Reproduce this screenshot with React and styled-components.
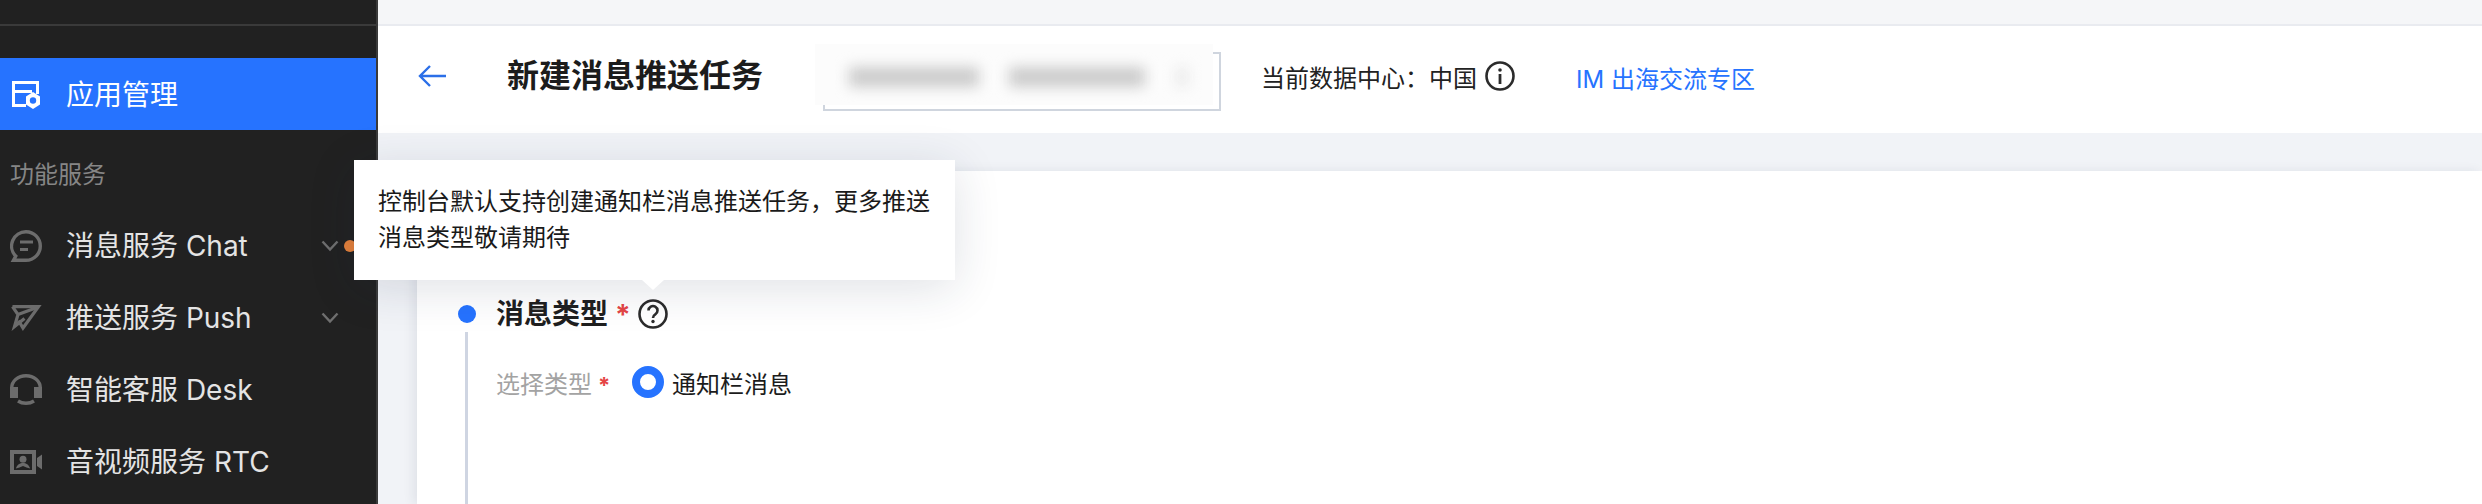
import React from "react";
import styled, { createGlobalStyle } from "styled-components";

const FONT = `Inter, "Noto Sans CJK SC", "Noto Sans", sans-serif`;

const Global = createGlobalStyle`
  html, body { margin: 0; padding: 0; background: #f1f3f7; }
  * { box-sizing: border-box; }
  #root { font-family: ${FONT}; }
`;

const Page = styled.div`
  position: relative;
  display: flex;
  width: 2482px;
  height: 504px;
  overflow: hidden;
  background: #f1f3f7;
`;

const Sidebar = styled.aside`
  flex: 0 0 378px;
  height: 100%;
  background: #212121;
  border-right: 2px solid #3a3a3a;
  padding-top: 24px;
  color: #e4e4e4;
`;

const SideRule = styled.div`
  height: 2px;
  background: #3a3a3a;
  margin-bottom: 32px;
`;

const NavRow = styled.div`
  position: relative;
  display: flex;
  align-items: center;
  height: 72px;
  padding-left: 10px;
  font-size: 28px;
  color: ${(p) => (p.$active ? "#ffffff" : "#e4e4e4")};
  background: ${(p) => (p.$active ? "#2673ff" : "transparent")};
  svg.nav-icon { flex: 0 0 32px; margin-right: 24px; }
`;

const NavText = styled.span`
  margin-bottom: ${(p) => (p.$active ? 3 : 4)}px;
`;

const NavChevron = styled.svg`
  position: absolute;
  left: 321px;
  top: 30px;
`;

const Dot = styled.span`
  position: absolute;
  left: 344px;
  top: 30px;
  width: 12px;
  height: 12px;
  border-radius: 50%;
  background: #e37f3a;
`;

const SectionLabel = styled.div`
  padding: 28px 0 18px 10px;
  font-size: 24px;
  line-height: 34px;
  color: #868686;
`;

const Main = styled.main`
  flex: 1;
  display: flex;
  flex-direction: column;
  min-width: 0;
  height: 100%;
`;

const TopStrip = styled.div`
  flex: 0 0 26px;
  background: #f5f6f8;
  border-bottom: 2px solid #e9ebf0;
`;

const Header = styled.header`
  flex: 0 0 107px;
  display: flex;
  align-items: center;
  padding: 0 0 7px 40px;
  background: #fff;
`;

const Title = styled.h1`
  margin: 0 0 0 61px;
  font-size: 32px;
  line-height: 44px;
  font-weight: 700;
  color: #1c1c1c;
`;

const SelectBox = styled.div`
  position: relative;
  width: 398px;
  height: 59px;
  margin: 10px 0 0 60px;
  border: 2px solid #cfd5de;
`;

const BlurCover = styled.div`
  position: absolute;
  left: -10px;
  top: -10px;
  width: 398px;
  height: 61px;
  background: #fcfcfc;
  display: flex;
  align-items: center;
  padding: 5px 0 0 34px;
  gap: 30px;
`;

const BlurBlock = styled.span`
  display: block;
  width: ${(p) => p.$w}px;
  height: 20px;
  background: ${(p) => p.$c || "#cbcbcb"};
  filter: blur(7px);
`;

const DataCenter = styled.div`
  display: flex;
  align-items: center;
  margin: 0 0 0 40px;
  font-size: 24px;
  color: #222;
  svg { margin-left: 8px; }
`;

const HeaderLink = styled.a`
  margin: 3px 0 0 61px;
  font-size: 24px;
  color: #2673ff;
`;

const Card = styled.section`
  position: relative;
  flex: 1 1 0;
  min-height: 0;
  margin: 38px 0 0 39px;
  padding: 125px 0 0 41px;
  background: #fff;
  box-shadow: -4px 0 10px rgba(30, 40, 70, 0.08);
`;

const StepHead = styled.div`
  display: flex;
  align-items: center;
  height: 36px;
`;

const StepDot = styled.span`
  flex: 0 0 18px;
  height: 18px;
  border-radius: 50%;
  background: #2673ff;
  margin-right: 20px;
`;

const StepTitle = styled.h2`
  margin: 0;
  font-size: 28px;
  line-height: 36px;
  font-weight: 700;
  color: #1f1f1f;
`;

const Star = styled.span`
  color: #e54545;
  font-size: ${(p) => p.$size}px;
  font-weight: 700;
  margin-left: ${(p) => p.$gap}px;
  padding-top: ${(p) => p.$drop}px;
  line-height: 1;
`;

const HelpIcon = styled.svg`
  margin-left: 7px;
`;

const StepBody = styled.div`
  margin: 0 0 0 7px;
  height: 200px;
  border-left: 3px solid #cfd5e2;
  padding: 32px 0 0 28px;
`;

const Field = styled.div`
  display: flex;
  align-items: center;
  height: 36px;
`;

const FieldLabel = styled.label`
  display: flex;
  align-items: center;
  width: 136px;
  font-size: 24px;
  color: #a3a3a3;
`;

const Radio = styled.span`
  flex: 0 0 32px;
  height: 32px;
  border-radius: 50%;
  border: 8px solid #2673ff;
  background: #fff;
  margin-right: 8px;
`;

const RadioText = styled.span`
  font-size: 24px;
  color: #1c1c1c;
`;

const Tooltip = styled.div`
  position: absolute;
  left: 354px;
  top: 160px;
  width: 601px;
  height: 120px;
  padding: 24px 24px;
  background: #fff;
  font-size: 24px;
  line-height: 36px;
  color: #1a1a1a;
  box-shadow: 0 8px 48px rgba(30, 40, 70, 0.14);
  &::after {
    content: "";
    position: absolute;
    left: 288px;
    bottom: -10px;
    width: 0;
    height: 0;
    border-left: 11px solid transparent;
    border-right: 11px solid transparent;
    border-top: 10px solid #fff;
  }
`;

const AppIcon = () => (
  <svg className="nav-icon" width="32" height="32" viewBox="0 0 32 32">
    <path d="M2 3h27v13h-3V6H5v6h17v3H5v11h11v3H2z" fill="#fff" />
    <path d="M23 14l7 4.500v8L23 31l-7-4.500v-8z" fill="#fff" />
    <circle cx="23" cy="22.500" r="3.200" fill="#2673ff" />
  </svg>
);

const ChatIcon = () => (
  <svg className="nav-icon" width="32" height="32" viewBox="0 0 32 32" fill="none">
    <path d="M16 1.700a14.300 14.300 0 0 1 0 28.600H3.500l2.300-4.200A14.300 14.300 0 0 1 16 1.700z" stroke="#6c6c6c" strokeWidth="3.400" />
    <path d="M10 12h13" stroke="#6c6c6c" strokeWidth="3" />
    <path d="M10 19.500h8" stroke="#6c6c6c" strokeWidth="3" />
  </svg>
);

const PushIcon = () => (
  <svg className="nav-icon" width="32" height="26" viewBox="0 0 32 26" fill="none">
    <path d="M2.500 1.600h26L13 23 8.500 15.500" stroke="#6c6c6c" strokeWidth="3.200" />
    <path d="M2.500 1.600L8 9.500 4.500 21.500l10-8M8 9.500L27 2.500" stroke="#6c6c6c" strokeWidth="3.200" />
  </svg>
);

const DeskIcon = () => (
  <svg className="nav-icon" width="32" height="32" viewBox="0 0 32 32" fill="none">
    <path d="M1.700 15V14a14.300 12.300 0 0 1 28.600 0v1" stroke="#6c6c6c" strokeWidth="3.400" />
    <path d="M0 13h8v11H0zM24 13h8v11h-8z" fill="#6c6c6c" />
    <path d="M8 27c4.500 3 11.500 3 16 0" stroke="#6c6c6c" strokeWidth="3.400" />
  </svg>
);

const RtcIcon = () => (
  <svg className="nav-icon" width="32" height="24" viewBox="0 0 32 24">
    <path d="M0 0h26v24H0z" fill="#6c6c6c" />
    <path d="M4 4h18v16H4z" fill="#212121" />
    <circle cx="13" cy="9.300" r="3.500" fill="#6c6c6c" />
    <path d="M6 18.500c1-4 4-5.500 7-5.500s6 1.500 7 5.500l-3.500-1-3.500-1.500-3.500 1.500z" fill="#6c6c6c" />
    <path d="M27 8l5-3.500v15L27 16z" fill="#6c6c6c" />
  </svg>
);

const Chevron = () => (
  <NavChevron width="18" height="12" viewBox="0 0 18 12" fill="none">
    <path d="M1.500 1.500L9 9.500l7.500-8" stroke="#6f6f6f" strokeWidth="2.400" />
  </NavChevron>
);

const App = () => (
  <Page>
    <Global />
    <Sidebar>
      <SideRule />
      <NavRow $active>
        <AppIcon />
        <NavText $active>应用管理</NavText>
      </NavRow>
      <SectionLabel>功能服务</SectionLabel>
      <NavRow>
        <ChatIcon />
        <NavText>消息服务 Chat</NavText>
        <Chevron />
        <Dot />
      </NavRow>
      <NavRow>
        <PushIcon />
        <NavText>推送服务 Push</NavText>
        <Chevron />
      </NavRow>
      <NavRow>
        <DeskIcon />
        <NavText>智能客服 Desk</NavText>
      </NavRow>
      <NavRow>
        <RtcIcon />
        <NavText>音视频服务 RTC</NavText>
      </NavRow>
    </Sidebar>
    <Main>
      <TopStrip />
      <Header>
        <svg width="28" height="22" viewBox="0 0 28 22" fill="none">
          <path d="M28 11H2M12 1L2 11l10 10" stroke="#2b6fe8" strokeWidth="2.400" />
        </svg>
        <Title>新建消息推送任务</Title>
        <SelectBox>
          <BlurCover>
            <BlurBlock $w={130} />
            <BlurBlock $w={136} />
            <BlurBlock $w={14} $c="#ececec" />
          </BlurCover>
        </SelectBox>
        <DataCenter>
          当前数据中心：中国
          <svg width="30" height="30" viewBox="0 0 30 30" fill="none">
            <circle cx="15" cy="15" r="13.500" stroke="#2b2b2b" strokeWidth="2.600" />
            <circle cx="15" cy="9" r="1.800" fill="#2b2b2b" />
            <path d="M15 13v10" stroke="#2b2b2b" strokeWidth="2.800" />
          </svg>
        </DataCenter>
        <HeaderLink>IM 出海交流专区</HeaderLink>
      </Header>
      <Card>
        <StepHead>
          <StepDot />
          <StepTitle>消息类型</StepTitle>
          <Star $size={28} $gap={7} $drop={2}>*</Star>
          <HelpIcon width="30" height="30" viewBox="0 0 30 30" fill="none">
            <circle cx="15" cy="15" r="13.500" stroke="#2b2b2b" strokeWidth="2.600" />
            <path d="M10.500 11.500a4.500 4.500 0 1 1 6.800 3.900c-1.500.9-2.300 1.700-2.300 3.600" stroke="#2b2b2b" strokeWidth="2.600" />
            <circle cx="15" cy="22.500" r="1.700" fill="#2b2b2b" />
          </HelpIcon>
        </StepHead>
        <StepBody>
          <Field>
            <FieldLabel>
              选择类型<Star $size={22} $gap={6} $drop={6}>*</Star>
            </FieldLabel>
            <Radio />
            <RadioText>通知栏消息</RadioText>
          </Field>
        </StepBody>
      </Card>
    </Main>
    <Tooltip>控制台默认支持创建通知栏消息推送任务，更多推送消息类型敬请期待</Tooltip>
  </Page>
);

export default App;
